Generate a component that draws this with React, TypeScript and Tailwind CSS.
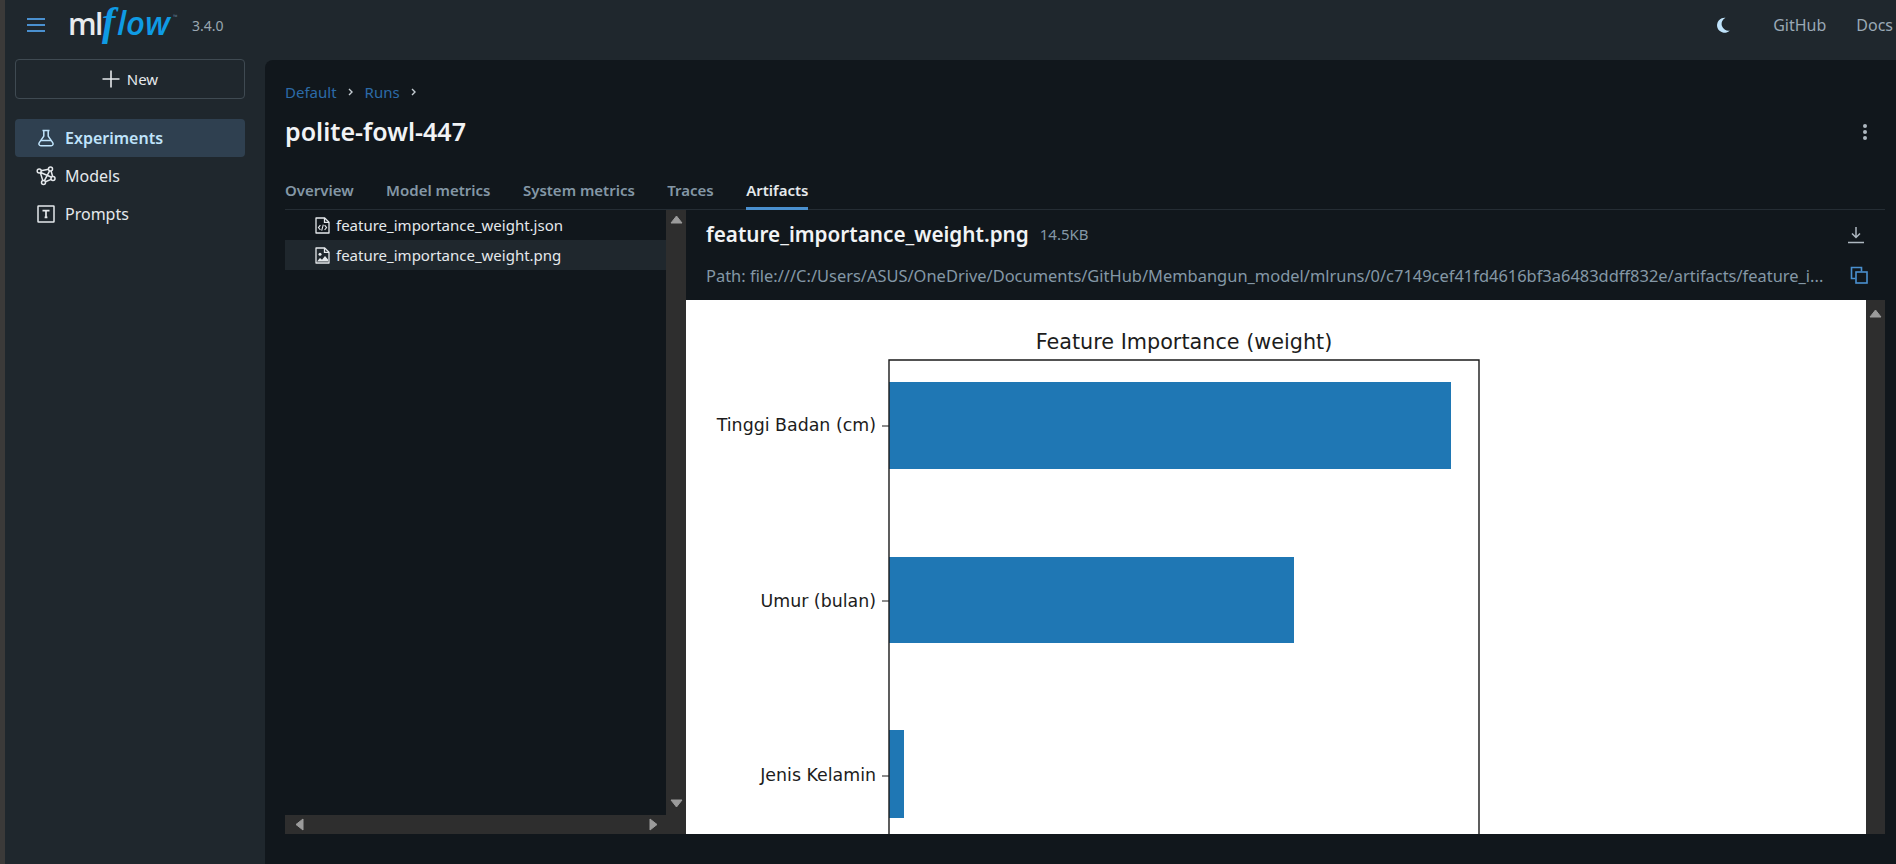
import { ReactNode } from "react"

const font = { fontFamily: '"Noto Sans", "Open Sans", sans-serif' }

function Flask() {
  return (
    <svg width="18" height="18" viewBox="0 0 18 18" fill="none" stroke="currentColor" strokeWidth="1.5" strokeLinejoin="round">
      <path d="M5.5 1.5h7M6.8 1.5v5.6L2.3 13.6c-1 1.5-.1 3.2 1.6 3.2h10.2c1.7 0 2.6-1.7 1.6-3.2L11.2 7.1V1.5" />
      <path d="M4 11.5h10" />
    </svg>
  )
}

function ModelsIcon() {
  return (
    <svg width="20" height="20" viewBox="0 0 20 20" fill="none" stroke="currentColor" strokeWidth="1.5">
      <circle cx="3.2" cy="5" r="2" />
      <circle cx="14.5" cy="3" r="2" />
      <circle cx="17" cy="12.5" r="2" />
      <circle cx="7.5" cy="16.5" r="2" />
      <path d="M5.2 4.7l7.3-1.4M4.6 6.5l11 4.8M4.4 6.8l2.4 7.8M13.6 4.8l-5.2 9.9M15.1 5l1.5 5.5M15.2 13.4l-5.8 2.4" />
    </svg>
  )
}

function PromptIcon() {
  return (
    <svg width="18" height="18" viewBox="0 0 18 18" fill="none" stroke="currentColor">
      <rect x="1" y="1" width="16" height="16" rx="0.5" strokeWidth="1.5" />
      <path d="M5.5 5.7h7M9 5.7v6.6M7.6 12.3h2.8" strokeWidth="1.7" />
    </svg>
  )
}

function FileCode() {
  return (
    <svg width="15" height="17" viewBox="0 0 15 17" fill="none" stroke="#e5e9ec" strokeWidth="1.3">
      <path d="M1 1h8.7L14 5.2V16H1z" strokeLinejoin="round" />
      <path d="M9.5 1v4.3H14" />
      <path d="M5.4 8.2L3.4 10.6l2 2.4M9.6 8.2l2 2.4-2 2.4M8.3 7.6l-1.6 6" strokeWidth="1.1" />
    </svg>
  )
}

function FileImage() {
  return (
    <svg width="15" height="17" viewBox="0 0 15 17" fill="none" stroke="#e5e9ec" strokeWidth="1.3">
      <path d="M1 1h8.7L14 5.2V16H1z" strokeLinejoin="round" />
      <path d="M9.5 1v4.3H14" />
      <circle cx="5" cy="7.2" r="1.5" fill="#e5e9ec" stroke="none" />
      <path d="M2 14.5l3-3.6 2 1.8 3-3.7 3 3.5v2z" fill="#e5e9ec" stroke="none" />
    </svg>
  )
}

function Arrow({ dir }: { dir: "up" | "down" | "left" | "right" }) {
  const points = {
    up: "1,9 6.5,2 12,9",
    down: "1,2 12,2 6.5,9",
    left: "9,1 9,12 2,6.5",
    right: "2,1 2,12 9,6.5",
  }
  return (
    <svg width="13" height="13" viewBox="0 0 13 13" fill="#9b9b9b" stroke="#9b9b9b" strokeLinejoin="round">
      <polygon points={points[dir]} />
    </svg>
  )
}

function NavItem({ icon, label, active }: { icon: ReactNode; label: string; active?: boolean }) {
  return (
    <div className={`flex h-[38px] items-center gap-[9px] rounded-[4px] pl-[21px] text-[16px] ${active ? "bg-[#2f4050] font-semibold text-[#bfe3fb]" : "text-[#e5e9ec]"}`}>
      <span className="flex w-[20px] justify-center">{icon}</span>
      {label}
    </div>
  )
}

function Chevron() {
  return (
    <svg width="8" height="10" viewBox="0 0 8 10" fill="none" stroke="#c4ccd2" strokeWidth="1.4">
      <path d="M2 2l3 3-3 3" />
    </svg>
  )
}

function Chart() {
  return (
    <svg width="1180" height="535" viewBox="0 0 1180 535" className="block" fontFamily='"DejaVu Sans", sans-serif'>
      <rect width="1180" height="535" fill="#ffffff" />
      <text x="498" y="49" textAnchor="middle" fontSize="20.75" fill="#1c1c1c">Feature Importance (weight)</text>
      <rect x="203" y="82" width="562" height="87" fill="#1f77b4" />
      <rect x="203" y="257" width="405" height="86" fill="#1f77b4" />
      <rect x="203" y="430" width="15" height="88" fill="#1f77b4" />
      <path d="M203 535V60H793V535" fill="none" stroke="#1a1a1a" strokeWidth="1.4" />
      <path d="M196 126h7M196 301h7M196 476h7" stroke="#1a1a1a" strokeWidth="1.2" />
      <g fontSize="17.4" fill="#1c1c1c" textAnchor="end">
        <text x="190" y="131">Tinggi Badan (cm)</text>
        <text x="190" y="307">Umur (bulan)</text>
        <text x="190" y="481">Jenis Kelamin</text>
      </g>
    </svg>
  )
}

export default function App() {
  return (
    <div className="flex h-[864px] w-[1896px] overflow-hidden bg-[#1f272d] text-[#e5e9ec]" style={font}>
      <div className="w-[5px] shrink-0 bg-[#3b3a39]" />
      <div className="flex min-w-0 flex-1 flex-col">
        <header className="flex h-[60px] shrink-0 items-center pb-[10px] pl-[21px] pr-[3px]">
          <svg width="20" height="16" viewBox="0 0 20 16" stroke="#4a90cf" strokeWidth="2">
            <path d="M1 2h18M1 8h18M1 14h18" />
          </svg>
          <div className="relative ml-[22px] flex h-[50px] w-[112px] items-center">
            <span className="mb-[3px] text-[30px] font-semibold leading-none tracking-[-1.5px] text-[#e8ebee]" style={{ fontFamily: '"Open Sans", sans-serif' }}>ml</span>
            <span className="absolute left-[34px] top-0 text-[40px] font-bold italic leading-[44px] text-[#0f9be4]" style={{ fontFamily: '"Liberation Serif", serif' }}>f</span>
            <span className="absolute left-[49px] top-[6px] text-[33px] font-semibold italic leading-none text-[#0f9be4]" style={{ fontFamily: '"Open Sans", sans-serif' }}>low</span>
            <span className="absolute left-[105px] top-[14px] text-[6px] leading-none text-[#5b7a90]">™</span>
          </div>
          <span className="ml-[12px] text-[14px] text-[#9aa7b1]">3.4.0</span>
          <div className="ml-auto flex items-center">
            <svg width="16" height="16" viewBox="0 0 16 16" fill="#bfe3fb">
              <path d="M10.5 0.8A7.5 7.5 0 1 0 14.8 13.6 6.8 6.8 0 0 1 10.5 0.8z" />
            </svg>
            <span className="ml-[42px] text-[16px] text-[#9aa9b5]">GitHub</span>
            <span className="ml-[30px] text-[16px] text-[#9aa9b5]">Docs</span>
          </div>
        </header>

        <div className="flex min-h-0 flex-1">
          <aside className="flex w-[260px] shrink-0 flex-col pl-[10px] pr-[20px]">
            <button className="-mt-[1px] flex h-[40px] items-center justify-center gap-[7px] rounded-[4px] border border-[#3f4a52] text-[15px] text-[#e5e9ec]">
              <svg width="18" height="18" viewBox="0 0 18 18" stroke="#e5e9ec" strokeWidth="1.6">
                <path d="M9 0.5v17M0.5 9h17" />
              </svg>
              New
            </button>
            <nav className="mt-[20px] flex flex-col">
              <NavItem icon={<Flask />} label="Experiments" active />
              <NavItem icon={<ModelsIcon />} label="Models" />
              <NavItem icon={<PromptIcon />} label="Prompts" />
            </nav>
          </aside>

          <main className="flex min-w-0 flex-1 flex-col rounded-tl-[8px] bg-[#11171c] pl-[20px] pr-[11px]">
            <div className="mt-[22px] flex h-[20px] items-center gap-[10px] text-[15px] text-[#2c6ba8]">
              <span>Default</span>
              <Chevron />
              <span>Runs</span>
              <Chevron />
            </div>
            <div className="mt-[10px] flex h-[40px] items-center justify-between">
              <h1 className="text-[25px] font-semibold text-[#f1f3f5]">polite-fowl-447</h1>
              <svg width="6" height="18" viewBox="0 0 6 18" fill="#aeb8c0" className="mr-[17px]">
                <circle cx="3" cy="3" r="2" />
                <circle cx="3" cy="9" r="2" />
                <circle cx="3" cy="15" r="2" />
              </svg>
            </div>
            <div className="mt-[26px] flex h-[32px] shrink-0 gap-[32.4px] border-b border-[#252d34] text-[15px] font-semibold text-[#8497a6]">
              <span className="pt-[1px]">Overview</span>
              <span className="pt-[1px]">Model metrics</span>
              <span className="pt-[1px]">System metrics</span>
              <span className="pt-[1px]">Traces</span>
              <span className="h-[32px] border-b-[3px] border-[#4a90cf] pt-[1px] text-[#e5e9ec]">Artifacts</span>
            </div>

            <div className="flex min-h-0 flex-1 pb-[30px]">
              <div className="flex w-[401px] shrink-0 flex-col">
                <div className="flex min-h-0 flex-1">
                  <div className="flex min-w-0 flex-1 flex-col pt-[1px] text-[15px]">
                    <div className="flex h-[29px] items-center gap-[6px] pl-[30px]">
                      <FileCode />
                      feature_importance_weight.json
                    </div>
                    <div className="flex h-[30px] items-center gap-[6px] bg-[#1f272d] pl-[30px]">
                      <FileImage />
                      feature_importance_weight.png
                    </div>
                  </div>
                  <div className="flex w-[20px] shrink-0 flex-col items-center justify-between bg-[#2e2e2e] py-[4px]">
                    <Arrow dir="up" />
                    <Arrow dir="down" />
                  </div>
                </div>
                <div className="flex h-[19px] shrink-0 items-center justify-between bg-[#2e2e2e] pl-[9px] pr-[25px]">
                  <Arrow dir="left" />
                  <Arrow dir="right" />
                </div>
              </div>

              <div className="flex min-w-0 flex-1 flex-col">
                <div className="flex h-[49px] shrink-0 items-center pl-[20px] pr-[20px]">
                  <span className="text-[20.7px] font-semibold text-[#f1f3f5]">feature_importance_weight.png</span>
                  <span className="ml-[11px] text-[15px] text-[#8497a6]">14.5KB</span>
                  <svg width="18" height="18" viewBox="0 0 18 18" fill="none" stroke="#aeb8c0" strokeWidth="1.5" className="ml-auto">
                    <path d="M9 1v10M5 7.5L9 11.5l4-4M1 16.5h16" />
                  </svg>
                </div>
                <div className="flex h-[41px] shrink-0 items-start pl-[20px] pr-[17px] pt-[5px]">
                  <span className="text-[16.45px] text-[#8497a6]">Path: file:///C:/Users/ASUS/OneDrive/Documents/GitHub/Membangun_model/mlruns/0/c7149cef41fd4616bf3a6483ddff832e/artifacts/feature_i...</span>
                  <svg width="18" height="18" viewBox="0 0 18 18" fill="none" stroke="#4a90cf" strokeWidth="1.6" className="ml-auto mt-[2px] shrink-0">
                    <path d="M5.5 12.5H1.5V1.5h10v4" />
                    <rect x="6" y="6" width="11" height="11" />
                  </svg>
                </div>
                <div className="flex min-h-0 flex-1 overflow-hidden">
                  <div className="min-w-0 flex-1 overflow-hidden">
                    <Chart />
                  </div>
                  <div className="flex w-[19px] shrink-0 flex-col items-center bg-[#2e2e2e] pt-[8px]">
                    <Arrow dir="up" />
                  </div>
                </div>
              </div>
            </div>
          </main>
        </div>
      </div>
    </div>
  )
}
